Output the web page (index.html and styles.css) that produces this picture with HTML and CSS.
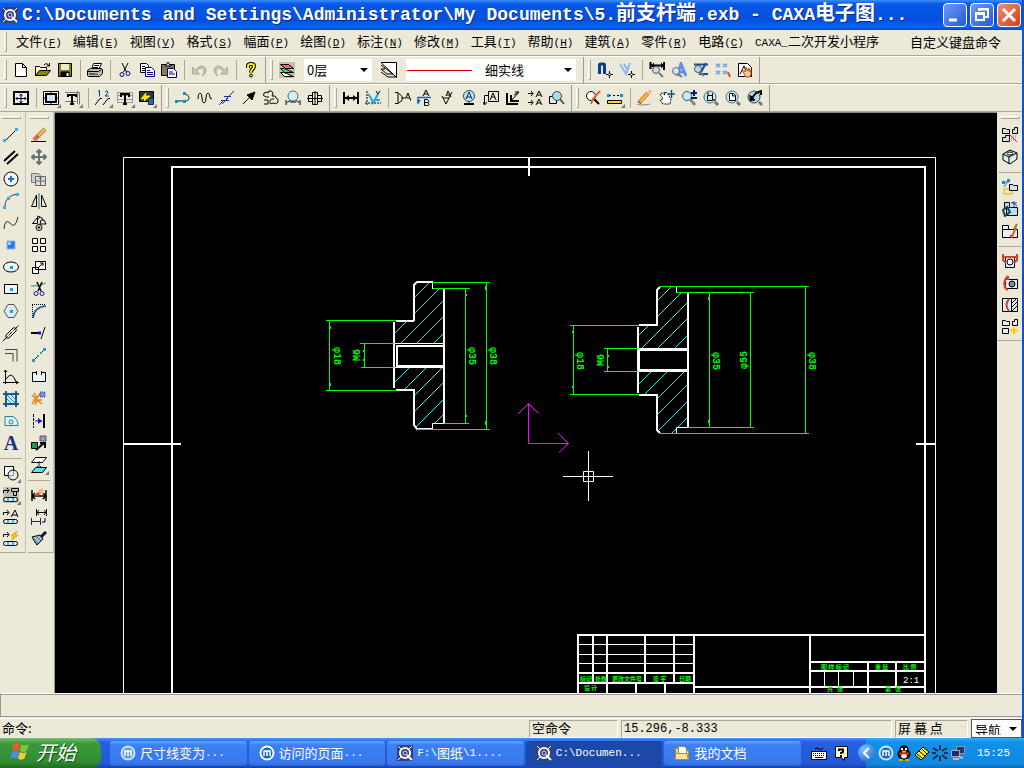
FILE: index.html
```html
<!DOCTYPE html>
<html lang="zh-CN">
<head>
  <meta charset="UTF-8">
  <meta name="viewport" content="width=device-width, initial-scale=1.0">
  <title>CAXA电子图板</title>
  <link rel="stylesheet" href="styles.css">
</head>
<body>

<div class="window">
  <header class="titlebar">
    <svg class="app" viewBox="0 0 16 16"><rect width="16" height="16" fill="#36427e" stroke="none"/><path d="M1 1l4 4M15 1l-4 4M1 15l4-4" stroke="#fff"/><circle cx="8" cy="8" r="5" stroke="#fff" stroke-width="2"/><circle cx="8" cy="8" r="2" stroke="#cde"/><path d="M10 10l5 5" stroke="#fff" stroke-width="2"/></svg>
    <h1>C:\Documents and Settings\Administrator\My Documents\5.<span class="cn">前支杆端</span>.exb - CAXA<span class="cn">电子图</span>...</h1>
    <div class="winbtns">
      <button aria-label="最小化"><svg viewBox="0 0 20 20"><path d="M4 15h8" stroke="#fff" stroke-width="3"/></svg></button>
      <button aria-label="还原"><svg viewBox="0 0 20 20"><path d="M7 6V4h9v8h-3M7 4.500h9" stroke="#fff" stroke-width="2"/><path d="M4 8h8v7H4zM4 9h8" stroke="#fff" stroke-width="2"/></svg></button>
      <button class="close" aria-label="关闭"><svg viewBox="0 0 20 20"><path d="M4 4l12 12M16 4L4 16" stroke="#fff" stroke-width="3"/></svg></button>
    </div>
  </header>

  <nav class="menu">
    <i class="grip"></i>
    <button>文件<span>(<u>F</u>)</span></button>
    <button>编辑<span>(<u>E</u>)</span></button>
    <button>视图<span>(<u>V</u>)</span></button>
    <button>格式<span>(<u>S</u>)</span></button>
    <button>幅面<span>(<u>P</u>)</span></button>
    <button>绘图<span>(<u>D</u>)</span></button>
    <button>标注<span>(<u>N</u>)</span></button>
    <button>修改<span>(<u>M</u>)</span></button>
    <button>工具<span>(<u>T</u>)</span></button>
    <button>帮助<span>(<u>H</u>)</span></button>
    <button>建筑<span>(<u>A</u>)</span></button>
    <button>零件<span>(<u>R</u>)</span></button>
    <button>电路<span>(<u>C</u>)</span></button>
    <button><span>CAXA_</span>二次开发小程序</button>
    <button class="keys">自定义键盘命令</button>
  </nav>

  <div class="bars">
    <div class="bar">
      <i class="grip"></i>
      <button aria-label="新建"><svg viewBox="0 0 16 16"><path d="M2.500 1.500h7l4 4v9h-11zM9.500 1.500v4h4" fill="#fff"/></svg></button>
      <button aria-label="打开"><svg viewBox="0 0 16 16"><path d="M.5 13.500v-9h4l1 1h6v3" fill="#ffc"/><path d="M.5 13.500l4-5h11l-4 5z" fill="#880"/><path d="M9 3q3-3 5 1M14.500 1v3h-3"/></svg></button>
      <button aria-label="保存"><svg viewBox="0 0 16 16"><path d="M1.500 1.500h13v13h-13z" fill="#880"/><path d="M4 2h8v6H4z" fill="#ece9d8" stroke="none"/><path d="M4 10h8v4H4z" fill="#000"/><path d="M10.500 11v3" stroke="#fff" stroke-width="2"/></svg></button>
      <i class="sep"></i>
      <button aria-label="打印"><svg viewBox="0 0 16 16"><path d="M4.500 7l2-5.500h8L12 7" fill="#fff"/><path d="M7 3.500h5M6 5.500h5"/><path d="M.5 8.500l3-2h11l1 1v4l-3 3h-11l-1-1z" fill="#bbb"/><path d="M.5 9.500h11l3-2M2 12h9"/><path d="M8 11h3" stroke="#dd0"/></svg></button>
      <i class="sep"></i>
      <button aria-label="剪切"><svg viewBox="0 0 16 16"><path d="M5 1l4.500 9M11 1L6.500 10"/><g stroke="#008"><circle cx="5" cy="12.500" r="2"/><circle cx="11" cy="11.500" r="2"/></g></svg></button>
      <button aria-label="复制"><svg viewBox="0 0 16 16"><path d="M1.500 1.500h6l2 2v7h-8z" fill="#fff"/><path d="M3 4.500h3M3 6.500h4M3 8.500h4"/><path d="M6.500 5.500h6l3 3v6h-9z" fill="#fff" stroke="#008"/><path d="M8 8.500h3M8 10.500h6M8 12.500h6" stroke="#008"/></svg></button>
      <button aria-label="粘贴"><svg viewBox="0 0 16 16"><path d="M.5 2.500h13v11H.5z" fill="#875"/><path d="M4 4V2.500h1.500l1-2h1l1 2H10V4z" fill="#dd7"/><path d="M6.500 6.500h6l3 3v6h-9z" fill="#fff" stroke="#008"/><path d="M8 10h4M8 12h6" stroke="#008"/></svg></button>
      <i class="sep"></i>
      <button aria-label="撤销"><svg viewBox="0 0 16 16"><path d="M1.500 5v7h7l-3-2q2-5 6-4 3 2 0 8 5-4 3-8-4-5-10 2z" fill="#cac7b8" stroke="#aca899"/></svg></button>
      <button aria-label="重做"><svg viewBox="0 0 16 16"><path d="M14.500 5v7h-7l3-2q-2-5-6-4-3 2 0 8-5-4-3-8 4-5 10 2z" fill="#cac7b8" stroke="#aca899"/></svg></button>
      <i class="sep"></i>
      <button aria-label="帮助"><svg viewBox="0 0 16 16"><path d="M5 6V4q0-2 3-2t3 2q0 2-1.500 3T8 10.500" stroke-width="4"/><path d="M5 6V4q0-2 3-2t3 2q0 2-1.500 3T8 10.500" stroke="#fe0" stroke-width="2"/><circle cx="8" cy="13.500" r="1.500" fill="#fe0"/></svg></button>
    </div>
    <div class="bar">
      <i class="grip"></i>
      <button aria-label="层设置"><svg viewBox="0 0 16 16"><path d="M0 0h16v16H0z" fill="#c4c1b4" stroke="none"/><path d="M1.500 2.500h8l5 4h-8z" fill="#f66"/><path d="M1.500 6.500h3l3 1 7 3h-9z" fill="#4d6"/><path d="M1.500 10.500h3l3 1 7 3h-9z" fill="#fff"/></svg></button>
      <div class="drop layer"><select aria-label="当前层"><option>0层</option></select></div>
      <button aria-label="线型"><svg viewBox="0 0 16 16"><path d="M0 .5h15.500v15z" fill="#fff"/><path d="M0 3l12 9h-6L0 7h4M0 10l7 5h8" /></svg></button>
      <div class="drop linetype">
        <svg class="sample"><path d="M0 2h65" stroke="#e00000" stroke-width="1"/></svg>
        <select aria-label="当前线型"><option>细实线</option></select>
      </div>
    </div>
    <div class="bar">
      <i class="grip"></i>
      <button aria-label="捕捉"><svg viewBox="0 0 16 16"><path d="M2.500 12V3q0-1 1-1h3q1 0 1 1v9" stroke="#0a3a9c" stroke-width="3"/><path d="M12.500 9v7M9 12.500h7"/><path d="M12.500 11l1.500 1.500-1.500 1.500-1.500-1.500z" fill="#fff"/></svg></button>
      <button aria-label="拾取"><svg viewBox="0 0 16 16"><path d="M1 2l6 10 4-11M5 2l3 5" stroke="#8db8f0" stroke-width="2"/><path d="M12.500 9v7M9 12.500h7"/><path d="M12.500 11l1.500 1.500-1.500 1.500-1.500-1.500z" fill="#fff"/></svg></button>
      <i class="sep"></i>
      <button aria-label="尺寸查询"><svg viewBox="0 0 16 16"><path d="M1.500 0v7M15 0v8M2 3.500h13" stroke-width="2"/><path d="M2 3.500l3-3v6zM15 3.500l-3-3v6z" fill="#000" stroke="none"/><circle cx="7" cy="8" r="3.500" fill="#cde" stroke="#555"/><path d="M10 11l4 4" stroke="#777" stroke-width="2"/></svg></button>
      <button aria-label="文字查询"><svg viewBox="0 0 16 16"><path d="M6 14l4-12 5 12M8 10h5" stroke="#5c93e8" stroke-width="3"/><circle cx="5" cy="9" r="3.500" fill="#cfe6f2" stroke="#667"/><path d="M7 12l4 3" stroke="#777" stroke-width="2"/></svg></button>
      <button aria-label="图形查询"><svg viewBox="0 0 16 16"><path d="M1 2.500h14M13 1L7 12h8" stroke="#1a4a98" stroke-width="2"/><circle cx="5" cy="7" r="3.500" fill="#bdd" stroke="#456"/><path d="M7 10l4 4" stroke="#777" stroke-width="2"/></svg></button>
      <button aria-label="阵列"><svg viewBox="0 0 16 16"><path d="M1 2l4 3M1 5l4-3M8 2l4 3M8 5l4-3M1 9l4 3M1 12l4-3M8 9l4 3M8 12l4-3" stroke="#7fa8e8" stroke-width="2"/><path d="M13 10l2 5" stroke="#e43" stroke-width="2"/></svg></button>
      <button aria-label="平移"><svg viewBox="0 0 16 16"><path d="M1.500 1.500h9l4 4v9h-13z" fill="#fff"/><path d="M3 12l4-8 3 6"/><path d="M5 8l3 2V6l1 3V5l2 4 1-3 1 4 1-2v5q-2 3-5 2z" fill="#ffc890" stroke="#b05a20"/></svg></button>
    </div>
  </div>

  <div class="bars">
    <div class="bar">
      <i class="grip"></i>
      <button aria-label="图幅"><svg viewBox="0 0 16 16"><path d="M1 2h14v12H1z" fill="#eef" stroke-width="2"/><path d="M8 4v9M3 8.500h10M6.500 5.500L8 4l1.500 1.500M6.500 11.500L8 13l1.500-1.500M4.500 7L3 8.500 4.500 10M11.500 7L13 8.500 11.500 10"/></svg></button>
      <i class="sep"></i>
      <button class="more" aria-label="图框"><svg viewBox="0 0 16 16"><path d="M.5 1.500h15v13H.5z" fill="#fff"/><path d="M3 4h10v8H3z" fill="#cfe6f4" stroke-width="2"/><path d="M8 2v3M8 11v3M1 8h3M12 8h3"/></svg></button>
      <button class="more" aria-label="标题栏"><svg viewBox="0 0 16 16"><path d="M0 2.500h14.500v12M0 11.500h11M12.500 1v13" stroke="#777"/><path d="M3 7V5h8v2M7 5v9M5 14h4" stroke-width="2"/></svg></button>
      <i class="sep"></i>
      <button class="more" aria-label="序号"><svg viewBox="0 0 16 16"><path d="M3 1.500l1.500-1v6M10 2q2-2 3 0 0 1-3 4h4" stroke="#0a3a9c"/><path d="M0 15l5-6.500h2M8 15l5-6.500h2"/></svg></button>
      <button class="more" aria-label="明细表"><svg viewBox="0 0 16 16"><path d="M.5 2.500h15v10H.5zM.5 5.500h15M.5 9.500h15" stroke="#999"/><path d="M4 7V4h8v3M8 4v10M6 14h4" stroke-width="2"/></svg></button>
      <button class="more" aria-label="图库"><svg viewBox="0 0 16 16"><path d="M.5 1.500h14v10H.5z" fill="#333"/><path d="M2 9l5-6-1 3h5l-6 5 1-3z" fill="#fe0" stroke="#fe0"/><path d="M9.500 8.500h5v6h-5z" fill="#36a" stroke="#135"/></svg></button>
    </div>
    <div class="bar">
      <i class="grip"></i>
      <button aria-label="多段线"><svg viewBox="0 0 16 16"><path d="M2 11h7q6 0 5-4-1-3-5-3" stroke="#222"/><path d="M0 10h3v3H0zM8 10h3v3H8zM8 2h3v3H8z" fill="#09c" stroke="none"/></svg></button>
      <button aria-label="波浪线"><svg viewBox="0 0 16 16"><path d="M1 9q0-6 2-6 2 0 2 5t2 5 2-5 2-5 2 5l2 1"/></svg></button>
      <button aria-label="双折线"><svg viewBox="0 0 16 16"><path d="M0 15l5-5M2 10.500h8M3 14L9 8M5 6.500h7M7 9l8-8" stroke="#1a2f9c"/></svg></button>
      <button aria-label="箭头"><svg viewBox="0 0 16 16"><path d="M2 14l7-7"/><path d="M14 2l-3 8-5-5z" fill="#000"/></svg></button>
      <button aria-label="齿轮"><svg viewBox="0 0 16 16"><path d="M3 7Q-1 6 1 3q2-2 4 0 0-3 3-2 3 1 1 5 4-1 4 2 3 1 2 4-2 3-5 1-4 2-3-2 1-3 4-2M3 7h3M1 10h4v4H1"/></svg></button>
      <button aria-label="圆弧拟合"><svg viewBox="0 0 16 16"><circle cx="8" cy="6" r="5" fill="#cdf3f5" stroke="#567"/><path d="M1 15v-5M15 15v-5M2 12.500l3-2M14 12.500l-3-2M5 12h6"/></svg></button>
      <button aria-label="孔轴"><svg viewBox="0 0 16 16"><path d="M0 8.500h16M1.500 5.500h4v6h-4zM5.500 2.500h5v12h-5zM10.500 5.500h4v6h-4zM8 1v14"/></svg></button>
    </div>
    <div class="bar">
      <i class="grip"></i>
      <button aria-label="尺寸标注"><svg viewBox="0 0 16 16"><path d="M1 2v12M15 2v12M2 8h12" stroke-width="2"/><path d="M2 8l4-3v6zM14 8l-4-3v6z" fill="#000" stroke="none"/></svg></button>
      <button aria-label="坐标标注"><svg viewBox="0 0 16 16"><path d="M2 1v14M0 13h16" stroke-dasharray="2 1"/><path d="M3 4l3 4 2 5 5-9M9 10h6" stroke="#1ba6dc" stroke-width="2"/><path d="M11 1l2 3 2-3"/></svg></button>
      <i class="sep"></i>
      <button aria-label="倒角标注"><svg viewBox="0 0 16 16"><path d="M0 2.500h3l4 4v4l-4 3H0M3 3v10M7 8h4l2-5 3 8M12 8h3"/></svg></button>
      <button aria-label="引出说明"><svg viewBox="0 0 16 16"><path d="M6 6l3-6 3 6M7 4h4M7.500 9.500h3q3 3 0 3h-3v-3M7.500 12.500h3q3 3 0 3h-3z"/><path d="M1 13V7.500h13M0 10l1 3 2-3" stroke="#1567c8" stroke-width="1.500"/></svg></button>
      <button aria-label="粗糙度"><svg viewBox="0 0 16 16"><path d="M3 6l4 8 6-12M4 8h6M7 6l2-5 3 6M8 5h3"/></svg></button>
      <button aria-label="基准代号"><svg viewBox="0 0 16 16"><circle cx="8" cy="6" r="5.500" fill="#bfe6f4" stroke="#345"/><path d="M5 9l3-7 3 7M6 7h4M8 12v2" stroke="#124"/><path d="M3 14h10" stroke-width="2"/></svg></button>
      <button aria-label="形位公差"><svg viewBox="0 0 16 16"><path d="M5.500 1.500h10v10h-10zM7 10l3-7 3 7M8 7h4M5 5.500H1.500v9M0 12l1.500 3L4 12"/></svg></button>
      <button aria-label="焊接符号"><svg viewBox="0 0 16 16"><path d="M2 3v11h11M6 5v6h8" stroke-width="2"/><path d="M6 11l8-9M9 5l5-3h-4"/></svg></button>
      <button aria-label="剖切符号"><svg viewBox="0 0 16 16"><path d="M1 3.500h5M4 1l2 2.500L4 6M1 12.500h5M4 10l2 2.500L4 15M9 7l3-6 3 6M10 5h4M9 15l3-6 3 6M10 13h4"/></svg></button>
      <button aria-label="局部放大"><svg viewBox="0 0 16 16"><path d="M.5 6.500h7v7h-7z"/><circle cx="8" cy="6" r="4.500" fill="#a9dfe3" stroke="#345"/><path d="M11 9l4 5" stroke="#555" stroke-width="2"/></svg></button>
    </div>
    <div class="bar">
      <i class="grip"></i>
      <button aria-label="重画"><svg viewBox="0 0 16 16"><circle cx="6" cy="6" r="4.500" fill="#fff"/><path d="M9 9l5 5" stroke-width="2"/><path d="M15 1L8 9l-2 5" stroke="#e36a1a" stroke-width="2"/></svg></button>
      <button class="more" aria-label="视图"><svg viewBox="0 0 16 16"><path d="M2 5.500h12" stroke-dasharray="2 2"/><path d="M0 4h3v3H0zM13 4h3v3h-3z" fill="#28c" stroke="none"/><path d="M.5 10.500h14v3H.5z" fill="#ed3"/></svg></button>
      <i class="sep"></i>
      <button aria-label="画笔"><svg viewBox="0 0 16 16"><path d="M0 14q4 2 13 0" stroke="#888"/><path d="M2 13l9-10" stroke="#a04a10" stroke-width="4"/><path d="M3 12l8-9" stroke="#ffb22e" stroke-width="3"/><path d="M12 2l2-1" stroke="#f4a090" stroke-width="3"/></svg></button>
      <button aria-label="动态平移"><svg viewBox="0 0 16 16"><path d="M4 14l-3-4 3-1-3-5 2-1 3 2-1-3 3 1 4 6-1 5z" fill="#fff" stroke-dasharray="2 1"/><path d="M12.500 0v8M9 4h7" stroke="#156" stroke-width="1.500"/></svg></button>
      <button aria-label="动态缩放"><svg viewBox="0 0 16 16"><circle cx="6" cy="6" r="4.500" fill="#c8eaf3" stroke="#456"/><path d="M9 9l5 6" stroke="#888" stroke-width="3"/><path d="M10 3h6M13 0v6M10 8h6" stroke="#118" stroke-width="2"/></svg></button>
      <button aria-label="窗口缩放"><svg viewBox="0 0 16 16"><circle cx="7" cy="7" r="6" fill="#c8eaf3" stroke="#476f80"/><path d="M12 12l3 3" stroke="#777" stroke-width="3"/><path d="M4.500 5.500h5v5h-5zM5 2v3M10 10h3M9.500 3v3"/></svg></button>
      <button aria-label="全部显示"><svg viewBox="0 0 16 16"><circle cx="7" cy="7" r="6" fill="#c8eaf3" stroke="#476f80"/><path d="M12 12l3 3" stroke="#777" stroke-width="3"/><path d="M4.500 3.500h4l2 2v5h-6zM7.500 4v2h3" fill="#fff"/></svg></button>
      <button aria-label="显示回溯"><svg viewBox="0 0 16 16"><circle cx="7" cy="7" r="6" fill="#b0dbe6" stroke="#345"/><path d="M12 12l3 3" stroke="#777" stroke-width="3"/><path d="M5 8l4-5 5-2v4" stroke-width="2"/><path d="M3 11V5l5 5z" fill="#000"/></svg></button>
    </div>
  </div>

  <main class="work">
    <div class="side left">
      <div class="palette">
        <i class="hgrip"></i>
        <button aria-label="直线"><svg viewBox="0 0 16 16"><path d="M2 14L14 2"/><path d="M0 12h3v3H0zM12 1h3v3h-3z" fill="#2ab4ee" stroke="none"/></svg></button>
        <button aria-label="平行线"><svg viewBox="0 0 16 16"><path d="M1 12L12 2M4 15L15 5" stroke-width="2"/></svg></button>
        <button aria-label="圆"><svg viewBox="0 0 16 16"><circle cx="8" cy="8" r="7" fill="#f2f6ff"/><path d="M8 5v6M5 8h6" stroke="#1570d0" stroke-width="2"/></svg></button>
        <button aria-label="圆弧"><svg viewBox="0 0 16 16"><path d="M2 15Q1 3 14 1" stroke="#345"/><path d="M0 13h3v3H0zM4 4h3v3H4zM13 0h3v3h-3z" fill="#2ab4ee" stroke="none"/></svg></button>
        <button aria-label="样条"><svg viewBox="0 0 16 16"><path d="M1 14Q2 3 7 8q5 7 8-6" stroke="#333"/></svg></button>
        <button aria-label="点"><svg viewBox="0 0 16 16"><path d="M4 4h8v8H4z" fill="#2a78e4" stroke="#8db8f0"/><path d="M5 5h3v3H5z" fill="#7be0ff" stroke="none"/></svg></button>
        <button aria-label="椭圆"><svg viewBox="0 0 16 16"><ellipse cx="8" cy="8" rx="7.500" ry="5" fill="#eef4fb"/><path d="M7 7h3v3H7z" fill="#18a0e8" stroke="none"/></svg></button>
        <button aria-label="矩形"><svg viewBox="0 0 16 16"><path d="M1.500 3.500h13v9h-13z" fill="#eef4fb"/><path d="M7 7h3v3H7z" fill="#18a0e8" stroke="none"/></svg></button>
        <button aria-label="正多边形"><svg viewBox="0 0 16 16"><path d="M5 1.500h6l4 6.500-4 6.500H5L1 8z" fill="#d8ecf5" stroke="#555"/><path d="M7 7h3v3H7z" fill="#18a0e8" stroke="none"/></svg></button>
        <button aria-label="中心线"><svg viewBox="0 0 16 16"><path d="M3 10l7-7q4-1 3 3l-7 7q-4 1-3-3z"/><path d="M0 16L16 0" stroke-dasharray="5 1 1 1"/></svg></button>
        <button aria-label="等距线"><svg viewBox="0 0 16 16"><path d="M2 2.500h12v12M2 6.500h8v8" stroke="#444"/></svg></button>
        <button aria-label="公式曲线"><svg viewBox="0 0 16 16"><path d="M2.500 1v14M0 13.500h16M1 3l1.500-2L4 3M13 12l2 1.500-2 1.500M3 10q6-9 10 3"/></svg></button>
        <button aria-label="剖面线"><svg viewBox="0 0 16 16"><path d="M3 3h10v10H3z" fill="#d0ecf5"/><path d="M3 0v16M13 0v16M0 3h16M0 13h16" stroke="#175a86" stroke-width="2"/><path d="M4 4l8 8M8 4l4 4M4 8l4 4" stroke="#2486b4"/></svg></button>
        <button aria-label="填充"><svg viewBox="0 0 16 16"><path d="M2 3.500h8q5 3 5 9H2z" fill="#dff4fb" stroke="#2a7fa0"/><circle cx="8" cy="9" r="2" stroke="#2a7fa0"/></svg></button>
        <button class="letter" aria-label="文字">A</button>
        <i class="hsep"></i>
        <button class="more" aria-label="块"><svg viewBox="0 0 16 16"><path d="M1.500 1.500h9v9h-9z" fill="#fff"/><circle cx="10" cy="10" r="5" fill="#dcf3fa" fill-opacity=".6"/></svg></button>
        <button class="more" aria-label="定义图符"><svg viewBox="0 0 16 16"><path d="M0 0h16v16H0z" fill="#c4c1b4" stroke="none"/><path d="M.5 6V3.500h5M4 1l2 2.500L4 6M8.500 1.500h7v3h-7zM10.500 4.500h3v4h-3z"/><rect x=".5" y="10.500" width="14" height="4" rx="2" fill="#cff4fc"/><path d="M5 11v4M10 11v4" stroke="#06a"/></svg></button>
        <button aria-label="图符文字"><svg viewBox="0 0 16 16"><path d="M.5 6V3.500h5M4 1l2 2.500L4 6M8 8l4-7 3 7M9 6h5"/><rect x=".5" y="10.500" width="14" height="4" rx="2" fill="#cff4fc"/><path d="M5 11v4M10 11v4" stroke="#06a"/></svg></button>
        <button aria-label="驱动图符"><svg viewBox="0 0 16 16"><path d="M.5 6V3.500h5M4 1l2 2.500L4 6"/><path d="M14 0L8 5h3l-2 4 6-5h-3z" fill="#fd0" stroke="#da0"/><rect x=".5" y="10.500" width="14" height="4" rx="2" fill="#cff4fc"/><path d="M5 11v4M10 11v4" stroke="#06a"/></svg></button>
      </div>
      <div class="palette">
        <i class="hgrip"></i>
        <button aria-label="删除"><svg viewBox="0 0 16 16"><path d="M0 14.500h15"/><path d="M3 13L14 2" stroke="#863" stroke-width="4"/><path d="M7 9l7-7" stroke="#f8b64a" stroke-width="3"/><path d="M3 13l3-3" stroke="#ef6a52" stroke-width="4"/></svg></button>
        <button aria-label="平移图形"><svg viewBox="0 0 16 16"><path d="M8 1v14M1 8h14M5.500 3.500L8 1l2.500 2.500M5.500 12.500L8 15l2.500-2.500M3.500 5.500L1 8l2.500 2.500M12.500 5.500L15 8l-2.500 2.500" stroke="#667477" stroke-width="2"/></svg></button>
        <button aria-label="复制图形"><svg viewBox="0 0 16 16"><path d="M.5 2.500h7l2 2v7h-9z" fill="#ccc" stroke="#777"/><path d="M4.500 5.500h10v9h-10zM9.500 6v8M5 10h9M8 8l1.500-2L11 8" fill="#ddd" stroke="#666"/></svg></button>
        <button aria-label="镜像"><svg viewBox="0 0 16 16"><path d="M5.500 2v11.500h-5zM10.500 2v11.500h5z"/><path d="M8 0v16" stroke="#177"/></svg></button>
        <button aria-label="旋转"><svg viewBox="0 0 16 16"><path d="M6.500 2.500v6h-5zM9 2q3 1 3 3M10 5h3l2 4H9z"/><circle cx="8" cy="12.500" r="3"/><path d="M8 11v3M6.500 12.500h3M6 1l3 1-2 2"/></svg></button>
        <button aria-label="阵列图形"><svg viewBox="0 0 16 16"><path d="M1.500 1.500h5v5h-5zM9.500 1.500h5v5h-5zM1.500 9.500h5v5h-5zM9.500 9.500h5v5h-5z" fill="#fff"/></svg></button>
        <button aria-label="缩放"><svg viewBox="0 0 16 16"><path d="M4.500 2.500h10v8h-10zM1.500 8.500h6v6h-6z" fill="#fff"/><path d="M7 9l5-5M9 4h3v3"/></svg></button>
        <button aria-label="裁剪"><svg viewBox="0 0 16 16"><path d="M0 5q8 1 15-3" stroke="#288"/><path d="M6 1l4 9M11 1L7 10" stroke-width="1.500"/><g stroke="#11a"><circle cx="5" cy="12.500" r="2"/><circle cx="11" cy="12.500" r="2"/></g></svg></button>
        <button aria-label="过渡"><svg viewBox="0 0 16 16"><path d="M1.500 15V2M1 1.500h14" stroke-dasharray="1 1"/><path d="M2 15Q3 4 15 3" stroke="#159" stroke-width="1.500"/></svg></button>
        <button aria-label="延伸"><svg viewBox="0 0 16 16"><path d="M0 8h7" stroke-width="2"/><path d="M7 8h3" stroke="#11d" stroke-width="3"/><path d="M10 14l4-12" /></svg></button>
        <button aria-label="打断"><svg viewBox="0 0 16 16"><path d="M2 14l4-4M10 6l4-4"/><path d="M1 12h3v3H1zM6 8h2v2H6zM9 5h2v2H9zM12 1h3v3h-3z" fill="#1aa8b8" stroke="none"/></svg></button>
        <button aria-label="拉伸"><svg viewBox="0 0 16 16"><path d="M5 3.500H1.500v9h13v-9H11" fill="#e7f4fa"/><path d="M5.500 2v4M10.500 2v4"/></svg></button>
        <button aria-label="打散"><svg viewBox="0 0 16 16"><path d="M1 4l4 4-4 5M3 2l3 5 3-4M2 9h9M4 14l2-5 5 4" stroke="#e38a1a" stroke-width="1.500"/><path d="M9 1h5v5H9z" fill="#7a8fe0" stroke="#23a" stroke-dasharray="1 1"/></svg></button>
        <button aria-label="对齐"><svg viewBox="0 0 16 16"><path d="M2.500 1v14" stroke-dasharray="3 1"/><path d="M13 1v14" stroke-width="2"/><path d="M4 8h7" stroke="#11d"/><path d="M11 8L7 5v6z" fill="#11d" stroke="none"/></svg></button>
        <button aria-label="格式刷图层"><svg viewBox="0 0 16 16"><path d="M.5 7.500h6v6h-6z" fill="#1a9a4a"/><path d="M9 1h6v5H9z" fill="#99b" stroke="#557"/><path d="M5 15l8-7M9 8h5v5" stroke-width="2"/></svg></button>
        <button class="more" aria-label="层修改"><svg viewBox="0 0 16 16"><path d="M4.500.5h11l-4 5H.5z" fill="#fff"/><path d="M4.500 10.500h11l-4 5H.5z" fill="#5fe0e8"/><path d="M8 4v7M6 9l2 2 2-2" stroke="#116"/></svg></button>
        <i class="hsep"></i>
        <button aria-label="标注编辑"><svg viewBox="0 0 16 16"><path d="M1 3v11M15 3v11M1 9h14M4 6L1 9l3 3M12 6l3 3-3 3" stroke-width="1.500"/><path d="M5 9l6-6" stroke="#d43" stroke-width="3"/><path d="M8 6l4-4" stroke="#fb6" stroke-width="3"/></svg></button>
        <button aria-label="尺寸驱动"><svg viewBox="0 0 16 16"><path d="M5.500 0v7M15.500 0v7M6 3.500h9M8 1L6 3.500 8 6M13 1l2 2.500L13 6"/><path d="M.5 9v7M9.500 9v7M1 12.500h8" stroke="#129"/><path d="M14 9v4h-3"/></svg></button>
        <button aria-label="格式刷"><svg viewBox="0 0 16 16"><path d="M1 6l8-2 3 4-6 6q-3-4-5-8z" fill="#9db9cc"/><path d="M10 6l5-5" stroke="#114" stroke-width="3"/><path d="M3 8l4 5M6 6l4 4" stroke="#579"/></svg></button>
      </div>
    </div>

    <div class="canvas">
      <svg>
        <!-- drawing uses screen coordinates, shifted to the canvas corner -->
        <g transform="translate(-55 -113)">
          <g class="white">
            <path class="thin" d="M123.500 700V157.500H935.500V700"/>
            <path d="M172 700V167H925V700M529 157V176M124 444H181M916 444H935"/>
          </g>

          <!-- title block -->
          <g class="white">
            <path d="M578 700V635H925M593 635V683M607 635V700M645 635V683M674 635V683M694 635V700M578 673H694M578 683H694M636 683V700M665 683V700M694 687H810M810 635V700M810 662H925M810 671H925M810 687H925M868 662V700M896 662V687"/>
            <path class="thin" d="M578 644.500H694M578 654.500H694M578 663.500H694M824.500 671V687M838.500 671V687M853.500 671V687"/>
          </g>
          <g class="tiny">
            <text x="580" y="681">标记</text><text x="595" y="681">处数</text><text x="612" y="681">更改文件号</text><text x="653" y="681">签 字</text><text x="679" y="681">日期</text>
            <text x="584" y="690">设 计</text>
            <text x="821" y="669">图 样 标 记</text><text x="875" y="669">重 量</text><text x="903" y="669">比 例</text>
            <text x="827" y="691">共   张</text><text x="885" y="691">第   张</text>
          </g>
          <text class="scale" x="903" y="683">2:1</text>

          <!-- left part -->
          <g class="hatch">
            <path d="M415 297l14-14M415 313l24-24M395 333l11-11M401 343l42-42M417 343l26-26M434 343l9-9M395 382l14-14M405 389l21-21M415 395l27-27M415 411l28-28M416 427l27-27M435 423l8-8"/>
          </g>
          <g class="white">
            <path d="M394 322V388M396 321H414M396 390H414V425L417 429H433M414 321V285L417 282H433M444 289V423M396 346H444M396 366H444M397 346V366"/>
            <path class="thin" d="M394 343.500H444M394 367.500H444M432.500 282V289M432.500 429V423.500H444"/>
          </g>
          <g class="dim">
            <path d="M326 320.500H396M326 390.500H397M329.500 320V391M360 343.500H394M361 367.500H394M364.500 343V368M433 282.500H490M417 429.500H490M486.500 282V430M433 288.500H470M444 423.500H469M465.500 288V424"/>
            <path d="M330.500 326v3M330.500 383v3M363.500 350v2M363.500 359v2M485.500 286v4M485.500 421v4M466.500 294v2M466.500 415v2"/>
            <text transform="translate(334 347) rotate(90)">φ18</text>
            <text transform="translate(360 361) rotate(-90)">M6</text>
            <text transform="translate(469 347) rotate(90)">φ35</text>
            <text transform="translate(490 347) rotate(90)">φ38</text>
          </g>

          <!-- right part -->
          <g class="hatch">
            <path d="M658 300l13-13M658 316l23-23M639 335l9-9M642 348l45-45M658 348l29-29M675 348l12-12M639 384l12-12M645 394l22-22M658 398l26-26M658 414l29-29M659 430l28-28M672 433l15-15"/>
          </g>
          <g class="white">
            <path d="M638 327V393M639 325H657V290L660 287M639 395H657V430L660 433M688 293V427"/>
            <path class="thick" d="M638 349.500H688M638 370.500H688M638.500 349V371"/>
            <path class="thin" d="M676.500 287V293M676.500 433V427.500H688"/>
          </g>
          <g class="dim">
            <path d="M570 325.500H639M570 394.500H639M573.500 325V395M604 348.500H638M604 371.500H638M607.500 348V372M660 286.500H809M660 433.500H809M805.500 286V434M676 292.500H754M688 427.500H754M709.500 292V428M750.500 292V428"/>
            <path d="M572.500 331v2M572.500 386v2M608.500 355v2M608.500 366v2M708.500 297v3M708.500 420v3"/>
            <text transform="translate(577 352) rotate(90)">φ18</text>
            <text transform="translate(604 366) rotate(-90)">M6</text>
            <text transform="translate(713 352) rotate(90)">φ35</text>
            <text transform="translate(747 369) rotate(-90)">φ55</text>
            <text transform="translate(809 352) rotate(90)">φ38</text>
          </g>

          <path class="ucs" d="M528.500 403V443.500H569M518 414l10.500-10.500 10 10M558 433l10.500 10.500-9.500 9"/>
          <path class="cursor" d="M588.500 451V501M563 476.500H613M583.500 471.500h10v10h-10z"/>
        </g>
      </svg>
    </div>

    <div class="side right">
      <div class="palette">
        <i class="hgrip"></i>
        <button aria-label="图库提取"><svg viewBox="0 0 16 16"><path d="M.5 1.500h3l1 1h3v4h-7zM10.500 2.500h2v-2h3v6h-5zM.5 10.500h3v-2h4v6h-7z" fill="#ddd"/><path d="M9 9h6M9 11h6M9 13h6" stroke="#888" stroke-dasharray="1 1"/><path d="M7 7l8 8" stroke="#d22"/></svg></button>
        <button aria-label="三维视图"><svg viewBox="0 0 16 16"><path d="M1 5l7-4 7 3v6l-7 5-7-4zM1 5l6 3 8-4M7 8v7" fill="#d8f0ee"/><ellipse cx="8" cy="4.500" rx="3" ry="1.500" fill="#fff"/></svg></button>
        <i class="hsep"></i>
        <button aria-label="定义块"><svg viewBox="0 0 16 16"><path d="M2 8l4-6M1 3h6" stroke="#28a"/><path d="M0 2h3v3H0zM5 0h3v3H5z" fill="#28c" stroke="none"/><path d="M2 10h8v5H2z" fill="#fe9" stroke="#ca4"/><path d="M7.500 5.500h3l1 1h4v5h-8z" fill="#dde"/></svg></button>
        <button aria-label="块属性"><svg viewBox="0 0 16 16"><path d="M2.500 1.500h5v5h-5zM4.500 6.500h11v8h-11z" fill="#b9dff0"/><path d="M1 9l4-3 3 5-5 4z" stroke="#146" stroke-width="2"/><path d="M9 2h6M12 0v6M10 1l5 4" stroke="#24c"/></svg></button>
        <button aria-label="块编辑"><svg viewBox="0 0 16 16"><path d="M.5 2.500h6v4h-6zM.5 6.500h15v8H.5z" fill="#eee"/><path d="M8 12l2 2 4-10" stroke="#d53" stroke-width="2"/><path d="M12 6l3-5" stroke="#882" stroke-width="2"/></svg></button>
        <i class="hsep"></i>
        <button aria-label="构件库"><svg viewBox="0 0 16 16"><path d="M3.500 4.500h9v10h-9z" fill="#def"/><circle cx="8" cy="9" r="3" fill="#fff"/><path d="M1 1v6l3 3M15 1v6l-3 3M1 4h14" stroke="#d5432a" stroke-width="2"/></svg></button>
        <button aria-label="转换图库"><svg viewBox="0 0 16 16"><path d="M3.500 4.500h12v9h-12z" fill="#def"/><circle cx="10" cy="9" r="3" fill="#889"/><path d="M6 1Q-1 8 5 15M6 1v4M2 12l4 3" stroke="#d5432a" stroke-width="2"/></svg></button>
        <button aria-label="剖面库"><svg viewBox="0 0 16 16"><path d="M.5 1.500h15v13H.5z" fill="#dceff5"/><path d="M9.500 2v12M10 6l4-4M10 10l5-5M10 14l5-5"/><path d="M7 2q-5 6 0 12" stroke="#d5432a" stroke-width="2"/></svg></button>
        <button aria-label="新建构件"><svg viewBox="0 0 16 16"><path d="M.5 1.500h3l1 1h3v4h-7zM10.500 2.500h2v-2h3v6h-5zM.5 9.500h6v5h-6z" fill="#eee"/><path d="M12 8v7M8 11.500h8" stroke="#fc0" stroke-width="2"/></svg></button>
      </div>
    </div>
  </main>

  <div class="output"></div>

  <footer class="status">
    <label for="cmd">命令:</label>
    <input id="cmd" type="text">
    <span class="pane state">空命令</span>
    <span class="pane coords">15.296,-8.333</span>
    <span class="pane snap">屏 幕 点</span>
    <div class="drop nav"><select aria-label="捕捉方式"><option>导航</option></select></div>
  </footer>
</div>

<div class="taskbar">
  <button class="start">
    <svg viewBox="0 0 20 20"><g stroke="none"><path d="M4 3q3-2 6 0L9 9Q6 7 3 9z" fill="#f0582a"/><path d="M11 3q3 2 7 0l-2 6q-3 2-6 0z" fill="#7cc83c"/><path d="M3 10q3-2 6 0l-2 6q-3-2-6 0z" fill="#4c8cf4"/><path d="M10 10q3 2 6 0l-2 6q-3 2-6 0z" fill="#fcc83c"/></g></svg>
    开始
  </button>
  <div class="tasks">
    <button><svg viewBox="0 0 16 16"><circle cx="8" cy="8" r="6.500" fill="#5f9cd8" stroke="#cfe2f8" stroke-width="2"/><path d="M5 11V6h6v5M8 6v5" stroke="#fff" stroke-width="1.500"/></svg>尺寸线变为<span>...</span></button>
    <button><svg viewBox="0 0 16 16"><circle cx="8" cy="8" r="6.500" fill="#1668b0" stroke="#fff" stroke-width="2"/><path d="M5 11V6h6v5M8 6v5" stroke="#fff" stroke-width="1.500"/></svg>访问的页面<span>...</span></button>
    <button><svg viewBox="0 0 16 16"><rect width="16" height="16" fill="#36427e" stroke="none"/><path d="M1 1l4 4M15 1l-4 4M1 15l4-4" stroke="#fff"/><circle cx="8" cy="8" r="5" stroke="#fff" stroke-width="2"/><circle cx="8" cy="8" r="2" stroke="#cde"/><path d="M10 10l5 5" stroke="#fff" stroke-width="2"/></svg><span>F:\</span>图纸<span>\1....</span></button>
    <button class="active"><svg viewBox="0 0 16 16"><rect width="16" height="16" fill="#36427e" stroke="none"/><path d="M1 1l4 4M15 1l-4 4M1 15l4-4" stroke="#fff"/><circle cx="8" cy="8" r="5" stroke="#fff" stroke-width="2"/><circle cx="8" cy="8" r="2" stroke="#cde"/><path d="M10 10l5 5" stroke="#fff" stroke-width="2"/></svg><span>C:\Documen...</span></button>
    <button><svg viewBox="0 0 16 16"><path d="M1.500 3.500h5l1 2h7v9h-13z" fill="#f7d45c" stroke="#b8892a"/><path d="M4.500 1.500h6l2 2v8h-8z" fill="#fff" stroke="#889"/><path d="M1.500 14.500v-6h11l2 6z" fill="#fbe693" stroke="#b8892a"/></svg>我的文档</button>
  </div>
  <div class="lang">
    <svg viewBox="0 0 16 16"><path d="M.5 6.500h15v8H.5z" fill="#fff"/><path d="M2 8.500h12M2 10.500h12" stroke-dasharray="1 1"/><path d="M4 12.500h8M4 4q2-2 4 0t4-1"/></svg>
    <svg viewBox="0 0 16 16"><path d="M2.500 1.500h12v11h-3v3l-3-3h-6z" fill="#ffc"/><path d="M6 6V4.500h4V7L8 8v1M8 10v2" stroke-width="2"/></svg>
  </div>
  <div class="tray">
    <button class="expand" aria-label="显示隐藏的图标"><svg viewBox="0 0 16 16"><path d="M10 3L5 8l5 5" stroke="#fff" stroke-width="2"/></svg></button>
    <svg viewBox="0 0 16 16"><circle cx="8" cy="8" r="6.500" fill="#1668c0" stroke="#cfe6fc" stroke-width="2"/><path d="M5 11V6h6v5M8 6v5" stroke="#fff" stroke-width="1.500"/></svg>
    <svg viewBox="0 0 16 16"><ellipse cx="8" cy="9" rx="6" ry="5.500" fill="#111"/><ellipse cx="8" cy="4.500" rx="4" ry="4" fill="#111"/><ellipse cx="8" cy="11" rx="3.500" ry="3" fill="#fff"/><path d="M3 8.500h10" stroke="#e22" stroke-width="2"/><path d="M6 3v2M10 3v2" stroke="#fff" stroke-width="2"/><path d="M6 6.500h4M3 15h4M9 15h4" stroke="#f90" stroke-width="2"/></svg>
    <svg viewBox="0 0 16 16"><path d="M1 10l8-8 6 5-8 8z" fill="#fe3"/><path d="M5 6l6 5M8 4l5 5M3 9l5 4"/></svg>
    <svg viewBox="0 0 16 16"><path d="M8 0v5M8 11v5M1 3l5 3M10 10l5 4M15 3l-5 3M6 10l-5 4M0 8h4M12 8h4" stroke="#0a3350" stroke-width="2"/></svg>
    <svg viewBox="0 0 16 16"><path d="M6.500 1.500h8v7h-8z" fill="#25307c" stroke="#99a"/><path d="M1.500 5.500h8v6h-8z" fill="#1a2a70" stroke="#aab"/><path d="M3 14h6M9 12l4 1" stroke="#bbc" stroke-width="2"/></svg>
    <time>15:25</time>
  </div>
</div>

</body>
</html>
```

FILE: styles.css
```css
* {
  box-sizing: border-box;
}
body {
  margin: 0;
  height: 100vh;
  display: flex;
  flex-direction: column;
  overflow: hidden;
  background: #ece9d8;
  color: #000;
  font-family: "Noto Sans CJK SC", sans-serif;
  font-size: 13px;
}
button, select, input {
  font: inherit;
  color: inherit;
  margin: 0;
  padding: 0;
  border: none;
  background: none;
  border-radius: 0;
}
svg {
  display: block;
  flex: none;
  width: 16px;
  height: 16px;
  fill: none;
  stroke: #000;
}
.window {
  flex: 1;
  min-height: 0;
  display: flex;
  flex-direction: column;
  border-right: 2px solid #0a50d8;
}

/* title */
.titlebar {
  display: flex;
  align-items: center;
  height: 30px;
  flex: none;
  padding: 0 1px 0 2px;
  background: linear-gradient(#3a8cf8 0, #0a58e8 4px, #0350dc 20px, #0562fa 27px, #0348c8 30px);
}
.titlebar .app {
  margin-right: 4px;
}
h1 {
  flex: 1;
  min-width: 0;
  margin: 0;
  overflow: hidden;
  white-space: nowrap;
  color: #fff;
  font: bold 18px/30px "Liberation Mono", "Noto Sans CJK SC", monospace;
  text-shadow: 1px 1px #0a2a80;
}
h1 .cn {
  font-size: 20px;
}
.winbtns {
  display: flex;
  gap: 3px;
}
.winbtns button {
  width: 24px;
  height: 24px;
  display: grid;
  place-items: center;
  border: 1px solid #fff;
  border-radius: 4px;
  background: linear-gradient(135deg, #6f9cf4, #2358d8);
}
.winbtns svg {
  width: 20px;
  height: 20px;
}
.winbtns .close {
  background: linear-gradient(135deg, #f09070, #d83c14);
}

/* menu and toolbars */
.grip {
  flex: none;
  width: 3px;
  height: 20px;
  margin: 0 3px 0 4px;
  border-right: 1px solid #aca899;
  border-bottom: 1px solid #aca899;
  border-left: 1px solid #fff;
}
.menu {
  display: flex;
  align-items: center;
  gap: 1px;
  flex: none;
  height: 26px;
  padding-bottom: 2px;
  border-bottom: 1px solid #aca899;
  white-space: nowrap;
}
.menu button {
  padding: 0 5px;
  line-height: 20px;
}
.menu button span, .tasks span {
  font-family: "Liberation Mono", monospace;
  font-size: 11px;
}
.menu .keys {
  margin-left: 20px;
}
.bars {
  display: flex;
  flex: none;
  height: 28px;
  border-top: 1px solid #fff;
  border-bottom: 1px solid #aca899;
}
.bar {
  display: flex;
  align-items: center;
  padding-right: 3px;
  border-right: 1px solid #9a9a9a;
}
.bar button, .palette button {
  position: relative;
  width: 22px;
  height: 22px;
  flex: none;
  display: grid;
  place-items: center;
}
.sep {
  width: 8px;
  height: 20px;
  background: linear-gradient(#aca899, #aca899) center / 1px 100% no-repeat;
}
/* small corner that marks a fly-out */
.more::after {
  content: "";
  position: absolute;
  right: 1px;
  bottom: 1px;
  border: 2px solid #777;
  border-top-color: transparent;
  border-left-color: transparent;
}
.drop {
  position: relative;
  display: flex;
  align-items: center;
  background: #fff;
  font-size: 13px;
}
.drop select {
  appearance: none;
  flex: 1;
  min-width: 0;
  height: 100%;
  padding: 0 0 2px 3px;
}
.drop::after {
  content: "";
  position: absolute;
  right: 4px;
  top: 50%;
  margin-top: -2px;
  border: 4px solid transparent;
  border-top-color: #000;
  border-bottom: none;
  pointer-events: none;
}
.layer {
  width: 68px;
  height: 22px;
  margin: 0 6px;
}
.linetype {
  width: 170px;
  height: 22px;
  margin: 0 4px 0 6px;
}
.linetype .sample {
  width: 65px;
  height: 4px;
  margin: 0 10px 0 1px;
  shape-rendering: crispEdges;
}

/* palettes and drawing area */
.work {
  flex: 1;
  min-height: 0;
  display: flex;
}
.side {
  display: flex;
  align-items: flex-start;
  flex: none;
}
.left {
  gap: 2px;
  border-right: 1px solid #9a9888;
}
.palette {
  padding: 0 3px 2px 0;
  border-right: 1px solid #c4c1b0;
  border-bottom: 1px solid #aca899;
}
.right .palette {
  padding: 0 1px 2px 2px;
  border-right: none;
}
.hgrip {
  display: block;
  width: 20px;
  height: 3px;
  margin: 4px 1px 5px;
  border: 1px solid #fff;
  border-bottom-color: #aca899;
  border-right-color: #aca899;
}
.hsep {
  display: block;
  height: 8px;
  background: linear-gradient(#aca899, #aca899) center / 100% 1px no-repeat;
}
.palette .letter {
  font: bold 20px/22px "Liberation Serif", serif;
  color: #14347c;
}
.canvas {
  flex: 1;
  min-width: 0;
  overflow: hidden;
  background: #000;
  border-top: 1px solid #888;
}
.canvas svg {
  width: 100%;
  height: 100%;
}
.white {
  stroke: #fff;
  stroke-width: 2;
}
.white .thin {
  stroke-width: 1;
}
.white .thick {
  stroke-width: 3;
}
.hatch {
  stroke: #00f0f0;
  shape-rendering: crispEdges;
}
.dim, .tiny {
  stroke: #0f0;
}
.dim text {
  font: bold 10px "Liberation Mono", monospace;
  fill: #0f0;
  stroke: none;
}
.tiny text {
  font: bold 6px "Noto Sans CJK SC", sans-serif;
  fill: #0f0;
  stroke: none;
  white-space: pre;
}
.scale {
  font: 9px "Liberation Mono", monospace;
  fill: #fff;
  stroke: none;
}
.ucs {
  stroke: #f0f;
}
.cursor {
  stroke: #fff;
}

/* command line and status */
.output {
  flex: none;
  height: 24px;
  margin-bottom: 1px;
  border-top: 1px solid #fff;
  border-bottom: 1px solid #999;
  border-left: 1px solid #999;
  box-shadow: inset 0 1px #999;
}
.status {
  display: flex;
  align-items: center;
  gap: 3px;
  flex: none;
  height: 20px;
  padding-left: 2px;
  border-top: 1px solid #fff;
  white-space: nowrap;
}
.status label {
  height: 18px;
  line-height: 15px;
}
.status input {
  flex: 1;
  min-width: 0;
}
.pane {
  height: 18px;
  padding-left: 2px;
  line-height: 14px;
  border: 1px solid #fff;
  border-top-color: #aca899;
  border-left-color: #aca899;
}
.state {
  width: 89px;
}
.coords {
  width: 271px;
  font: 12px/16px "Liberation Mono", monospace;
}
.snap {
  width: 73px;
}
.nav {
  width: 51px;
  height: 19px;
  border: 1px solid #555;
}

/* taskbar */
.taskbar {
  display: flex;
  flex: none;
  height: 30px;
  color: #fff;
  white-space: nowrap;
  background: linear-gradient(#4a94f8 0, #2560e0 4px, #2258d8 26px, #1840a8 30px);
}
.start {
  display: flex;
  align-items: center;
  gap: 5px;
  width: 101px;
  padding: 0 0 2px 9px;
  border-radius: 0 10px 10px 0;
  background: linear-gradient(#78c070 0, #3c9a3c 5px, #308c30 24px, #206a20 30px);
  font-size: 20px;
  font-style: italic;
  line-height: 24px;
  text-shadow: 1px 1px #1c4a1c;
}
.start svg {
  width: 22px;
  height: 22px;
}
.tasks {
  flex: 1;
  min-width: 0;
  display: flex;
  gap: 2px;
  padding: 3px 0 2px;
  margin-left: 9px;
}
.tasks button {
  flex: 1;
  min-width: 0;
  max-width: 137px;
  display: flex;
  align-items: center;
  padding: 0 0 2px 10px;
  overflow: hidden;
  border-radius: 3px;
  background: linear-gradient(#6aa4fc 0, #3c80f4 4px, #3878ec 22px, #2c64d4);
}
.tasks button svg {
  margin-right: 4px;
}
.tasks .active {
  background: #1c48a8;
}
.lang {
  display: flex;
  align-items: center;
  gap: 6px;
  padding: 0 17px 0 10px;
}
.tray {
  display: flex;
  align-items: center;
  gap: 2px;
  padding-right: 14px;
  background: linear-gradient(#38b0f8 0, #1290e8 4px, #1088e0 26px, #0c68b8);
}
.expand {
  width: 18px;
  height: 18px;
  margin-left: -8px;
  display: grid;
  place-items: center;
  border-radius: 50%;
  background: radial-gradient(circle at 6px 5px, #7cc4fc, #1058c8);
}
.tray time {
  margin-left: 9px;
  font: 11px "Liberation Mono", monospace;
}
```
